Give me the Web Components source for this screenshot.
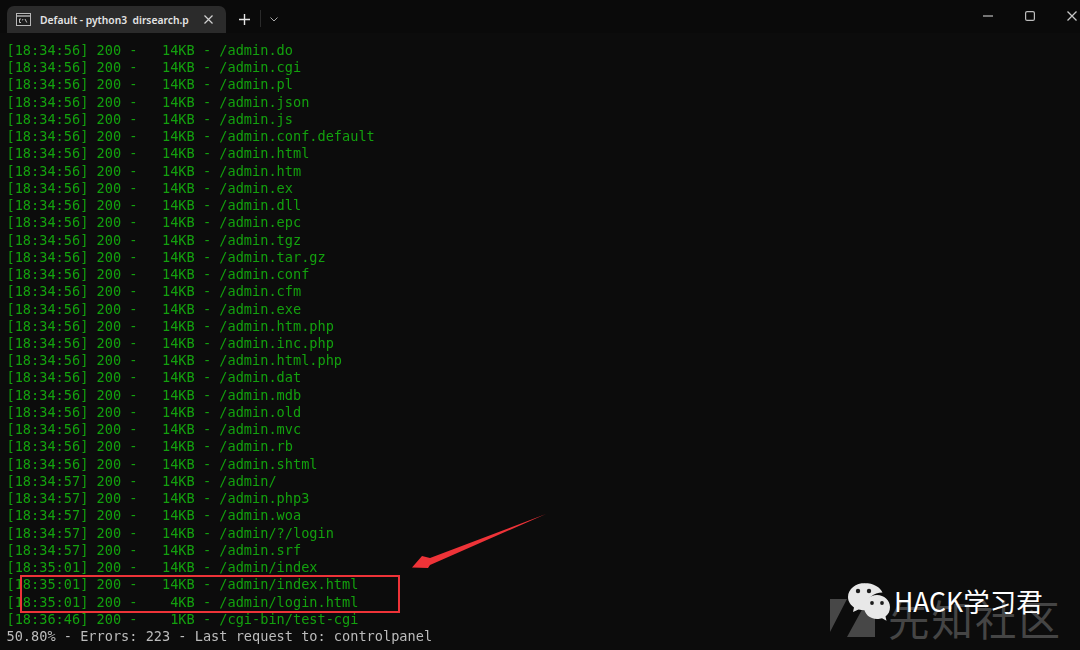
<!DOCTYPE html>
<html>
<head>
<meta charset="utf-8">
<title>Default - python3 dirsearch.py</title>
<style>
  html, body { margin: 0; height: 100%; background: #0c0c0c; overflow: hidden; }
</style>
</head>
<body>
<terminal-window>
  <title-bar slot="bar" title-text="Default - python3  dirsearch.p"></title-bar>
  <term-output id="out"></term-output>
  <scan-markup></scan-markup>
  <wechat-mark></wechat-mark>
</terminal-window>

<script>
const LINES = [
  ['18:34:56', '14KB', '/admin.do'], ['18:34:56', '14KB', '/admin.cgi'], ['18:34:56', '14KB', '/admin.pl'],
  ['18:34:56', '14KB', '/admin.json'], ['18:34:56', '14KB', '/admin.js'], ['18:34:56', '14KB', '/admin.conf.default'],
  ['18:34:56', '14KB', '/admin.html'], ['18:34:56', '14KB', '/admin.htm'], ['18:34:56', '14KB', '/admin.ex'],
  ['18:34:56', '14KB', '/admin.dll'], ['18:34:56', '14KB', '/admin.epc'], ['18:34:56', '14KB', '/admin.tgz'],
  ['18:34:56', '14KB', '/admin.tar.gz'], ['18:34:56', '14KB', '/admin.conf'], ['18:34:56', '14KB', '/admin.cfm'],
  ['18:34:56', '14KB', '/admin.exe'], ['18:34:56', '14KB', '/admin.htm.php'], ['18:34:56', '14KB', '/admin.inc.php'],
  ['18:34:56', '14KB', '/admin.html.php'], ['18:34:56', '14KB', '/admin.dat'], ['18:34:56', '14KB', '/admin.mdb'],
  ['18:34:56', '14KB', '/admin.old'], ['18:34:56', '14KB', '/admin.mvc'], ['18:34:56', '14KB', '/admin.rb'],
  ['18:34:56', '14KB', '/admin.shtml'], ['18:34:57', '14KB', '/admin/'], ['18:34:57', '14KB', '/admin.php3'],
  ['18:34:57', '14KB', '/admin.woa'], ['18:34:57', '14KB', '/admin/?/login'], ['18:34:57', '14KB', '/admin.srf'],
  ['18:35:01', '14KB', '/admin/index'], ['18:35:01', '14KB', '/admin/index.html'], ['18:35:01', '4KB', '/admin/login.html'],
  ['18:36:46', '1KB', '/cgi-bin/test-cgi']
];

class TerminalWindow extends HTMLElement {
  constructor () {
    super();
    this.attachShadow({ mode: 'open' });
    this.shadowRoot.innerHTML = `
    <style>
      :host { display: flex; flex-direction: column; position: relative; width: 1080px; height: 650px; background: #0c0c0c; overflow: hidden; }
    </style>
    <slot name="bar"></slot>
    <slot></slot>`;
  }
}

class TitleBar extends HTMLElement {
  constructor () {
    super();
    this.attachShadow({ mode: 'open' });
  }

  connectedCallback () {
    this.shadowRoot.innerHTML = `
    <style>
      :host { display: flex; flex: none; align-items: flex-end; height: 33px; padding-left: 7px; background: #0a0a0a; color: #e4e4e4; font: 600 10.300px "Noto Sans", "Open Sans", sans-serif; }
      .tab { box-sizing: border-box; display: flex; align-items: center; width: 219px; height: 27px; padding: 0 13px 0 9px; background: #2b2b2b; border-radius: 7px 7px 0 0; }
      .tab svg.term { flex: none; margin-right: 9px; }
      .name { flex: none; width: 149px; overflow: hidden; white-space: pre; }
      .tab svg.x { flex: none; margin-left: auto; }
      .plus { display: flex; margin: 0 0 8px 13px; }
      .sep { width: 1px; height: 17px; margin: 0 0 6px 10px; background: #2a2a2a; }
      .drop { display: flex; margin: 0 0 11px 9px; }
      .controls { display: flex; align-items: center; gap: 32px; margin: 0 3px 12px auto; }
    </style>
    <div class="tab">
      <svg class="term" width="15" height="13" viewBox="0 0 15 13" fill="none">
        <rect x=".5" y=".5" width="14" height="12" fill="#1c1c1c" stroke="#b8b8b8"/>
        <path d="M1 3h13" stroke="#b8b8b8" stroke-width="1.400"/>
        <path d="M5 6H3.500v3.500H5M7 6l-.6 1.400M9 6l1.800 3.500" stroke="#cfcfcf" stroke-width=".9"/>
      </svg>
      <span class="name">${this.getAttribute('title-text')}</span>
      <svg class="x" width="9" height="9" viewBox="0 0 9 9"><path d="M.5.5l8 8M8.500.5l-8 8" stroke="#d0d0d0" stroke-width="1.200"/></svg>
    </div>
    <svg class="plus" width="11" height="11" viewBox="0 0 11 11"><path d="M5.500 0v11M0 5.500h11" stroke="#e6e6e6" stroke-width="1.400"/></svg>
    <div class="sep"></div>
    <svg class="drop" width="8" height="5" viewBox="0 0 8 5" fill="none"><path d="M.5.5L4 4 7.500.5" stroke="#a8a8a8"/></svg>
    <div class="controls">
      <svg width="10" height="10" viewBox="0 0 10 10"><path d="M0 5h10" stroke="#bdbdbd" stroke-width="1.200"/></svg>
      <svg width="10" height="10" viewBox="0 0 10 10" fill="none"><rect x=".6" y=".6" width="8.800" height="8.800" rx="1.500" stroke="#bdbdbd" stroke-width="1.200"/></svg>
      <svg width="10" height="10" viewBox="0 0 10 10"><path d="M.5.5l9 9M9.500.5l-9 9" stroke="#c8c8c8" stroke-width="1.300"/></svg>
    </div>`;
  }
}

class TermOutput extends HTMLElement {
  constructor () {
    super();
    this.attachShadow({ mode: 'open' });
  }

  connectedCallback () {
    const rows = LINES.map(([time, size, path]) =>
      `<div class="ok">[${time}] 200 -   ${size.padStart(4)} - ${path}</div>`).join('');
    this.shadowRoot.innerHTML = `
    <style>
      :host { display: block; flex: none; padding: 9px 0 0 6.500px; font: 13.600px/17.235px "DejaVu Sans Mono", "Liberation Mono", monospace; filter: blur(.25px); }
      div { white-space: pre; }
      .ok { color: #13a10e; }
      .status { color: #bcbcbc; }
    </style>
    ${rows}
    <div class="status">50.80% - Errors: 223 - Last request to: controlpanel</div>`;
  }
}

class ScanMarkup extends HTMLElement {
  constructor () {
    super();
    this.attachShadow({ mode: 'open' });
    this.shadowRoot.innerHTML = `
    <style>
      :host { display: block; position: absolute; inset: 0; pointer-events: none; }
      .box { position: absolute; left: 20px; top: 575px; width: 376px; height: 34px; border: 2.500px solid #ee3338; }
      svg { position: absolute; left: 405px; top: 510px; }
    </style>
    <div class="box"></div>
    <svg width="150" height="66" viewBox="0 0 150 66">
      <path d="M141 4L25 48 17 46 7 57.500 23 58 25 55Z" fill="#ee3338"/>
    </svg>`;
  }
}

class WechatMark extends HTMLElement {
  constructor () {
    super();
    this.attachShadow({ mode: 'open' });
    this.shadowRoot.innerHTML = `
    <style>
      :host { display: block; position: absolute; left: 830px; top: 570px; width: 250px; height: 80px; }
      .logo { position: absolute; left: 0; top: 0; }
      .site { position: absolute; left: 58px; top: 23px; color: #454545; font: 400 41.500px/50px "Noto Sans CJK SC", sans-serif; letter-spacing: 2px; white-space: nowrap; }
      .name { position: absolute; left: 64px; top: 13px; color: #fff; font: 400 26.500px/36px "Noto Sans CJK SC", sans-serif; white-space: nowrap; }
    </style>
    <svg class="logo" width="65" height="80" viewBox="0 0 65 80">
      <path d="M0 29h17L0 62ZM34 36l11-7v38H17Z" fill="#474747"/>
      <path d="M35 13c-9 0-17 6-17 14 0 5 3 8 6 10.500l-1 4.500 5.500-2.500c2 .6 4 .8 6 .8 1 0 2-.1 3-.2-.6-2-1-3-1-4.600 0-7 7-13 16-13-2-5-9-9.500-18-9.500Z" fill="#e8e8e8"/>
      <path d="M47 25c-7 0-13 5-13 12s6 12 13 12c2 0 3.500-.3 5-.8l4.500 2.600-1-4.300c3-2.300 4.500-5.500 4.500-9.500C60 30 54 25 47 25Z" fill="#e8e8e8"/>
      <circle cx="28" cy="21" r="2.200" fill="#1c1c1c"/><circle cx="39" cy="21" r="2.200" fill="#1c1c1c"/>
      <circle cx="42" cy="33" r="1.900" fill="#1c1c1c"/><circle cx="52" cy="33" r="1.900" fill="#1c1c1c"/>
    </svg>
    <div class="site">先知社区</div>
    <div class="name">HACK学习君</div>`;
  }
}

customElements.define('terminal-window', TerminalWindow);
customElements.define('title-bar', TitleBar);
customElements.define('term-output', TermOutput);
customElements.define('scan-markup', ScanMarkup);
customElements.define('wechat-mark', WechatMark);
</script>
</body>
</html>
